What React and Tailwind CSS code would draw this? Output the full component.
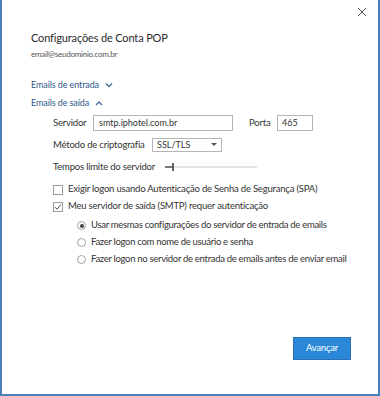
import React from 'react';

const font = { fontFamily: 'Lato, "Open Sans", sans-serif' };

const Chevron = ({ up }) => (
  <svg width="8" height="6" viewBox="0 0 8 6" className="ml-[6px]">
    <path d={up ? 'M1 5 L4 2 L7 5' : 'M1 1.5 L4 4.5 L7 1.5'} fill="none" stroke="#4a6f96" strokeWidth="1.4" />
  </svg>
);

const Radio = ({ checked, label }) => (
  <div className="flex items-center h-[17px]">
    <span className="w-[9px] h-[9px] rounded-full border border-[#a0a0a0] flex items-center justify-center shrink-0">
      {checked && <span className="w-[4px] h-[4px] rounded-full bg-[#444]" />}
    </span>
    <span className="ml-[5px]">{label}</span>
  </div>
);

const Check = ({ checked, label }) => (
  <div className="flex items-center h-[17px]">
    <span className="w-[10px] h-[10px] border border-[#9a9a9a] flex items-center justify-center shrink-0">
      {checked && (
        <svg width="8" height="8" viewBox="0 0 8 8">
          <path d="M1 4.2 L3 6.2 L7 1.5" fill="none" stroke="#444" strokeWidth="1" />
        </svg>
      )}
    </span>
    <span className="ml-[5px]">{label}</span>
  </div>
);

export default function App() {
  return (
    <div style={font} className="w-[380px] h-[396px] bg-white border-l-2 border-r-2 border-b-2 border-[#4a7fb5] relative text-[#333] text-[9.5px] tracking-[-0.2px] whitespace-nowrap">
      {/* Close */}
      <button className="absolute right-[11px] top-[7px] w-[10px] h-[10px]">
        <svg width="10" height="10" viewBox="0 0 10 10">
          <path d="M1 1 L9 9 M9 1 L1 9" stroke="#555" strokeWidth="1" />
        </svg>
      </button>

      <div className="pl-[29px] pt-[29px] flex flex-col">
        <div className="text-[11px] leading-[18px] text-[#2b2b2b] tracking-[-0.15px]">Configurações de Conta POP</div>
        <div className="text-[8px] leading-[14px] text-[#555] tracking-[-0.25px]">email@seudominio.com.br</div>

        <div className="flex items-center h-[18px] mt-[15px] text-[#2e5a88] text-[9px] tracking-[-0.1px]">
          Emails de entrada <Chevron />
        </div>
        <div className="flex items-center h-[18px] text-[#2e5a88] text-[9px] tracking-[-0.1px]">
          Emails de saída <Chevron up />
        </div>

        <div className="pl-[22px] flex flex-col">
          <div className="flex items-center h-[22px]">
            <span className="w-[40px]">Servidor</span>
            <div className="w-[140px] h-[16px] border border-[#b5b5b5] px-[5px] flex items-center text-[9px] tracking-normal">smtp.iphotel.com.br</div>
            <span className="ml-[16px] w-[28px]">Porta</span>
            <div className="w-[36px] h-[16px] border border-[#b5b5b5] px-[4px] flex items-center text-[9px] tracking-normal">465</div>
          </div>
          <div className="flex items-center h-[22px]">
            <span className="w-[99px]">Método de criptografia</span>
            <div className="w-[70px] h-[14px] border border-[#b5b5b5] px-[4px] flex items-center justify-between text-[9px] tracking-normal">
              <span>SSL/TLS</span>
              <svg width="6" height="4" viewBox="0 0 6 4"><path d="M0 0 L6 0 L3 3 Z" fill="#555" /></svg>
            </div>
          </div>
          <div className="flex items-center h-[22px]">
            <span className="w-[112px]">Tempos limite do servidor</span>
            <svg width="92" height="10" viewBox="0 0 92 10">
              <line x1="0" y1="5" x2="92" y2="5" stroke="#c8c8c8" strokeWidth="1" />
              <line x1="0" y1="5" x2="8" y2="5" stroke="#333" strokeWidth="1.2" />
              <line x1="8" y1="1" x2="8" y2="9" stroke="#333" strokeWidth="1.5" />
            </svg>
          </div>
          <div className="mt-[3px]">
            <Check label="Exigir logon usando Autenticação de Senha de Segurança (SPA)" />
          </div>
          <Check checked label="Meu servidor de saída (SMTP) requer autenticação" />

          <div className="pl-[24px] mt-[2px] flex flex-col tracking-[-0.3px]">
            <Radio checked label="Usar mesmas configurações do servidor de entrada de emails" />
            <Radio label="Fazer logon com nome de usuário e senha" />
            <Radio label="Fazer logon no servidor de entrada de emails antes de enviar email" />
          </div>
        </div>
      </div>

      <div className="absolute left-[291px] top-[337px]">
        <button className="w-[58px] h-[23px] bg-[#2b88d8] border border-[#2a6fb8] text-white text-[9.5px]">Avançar</button>
      </div>
    </div>
  );
}
